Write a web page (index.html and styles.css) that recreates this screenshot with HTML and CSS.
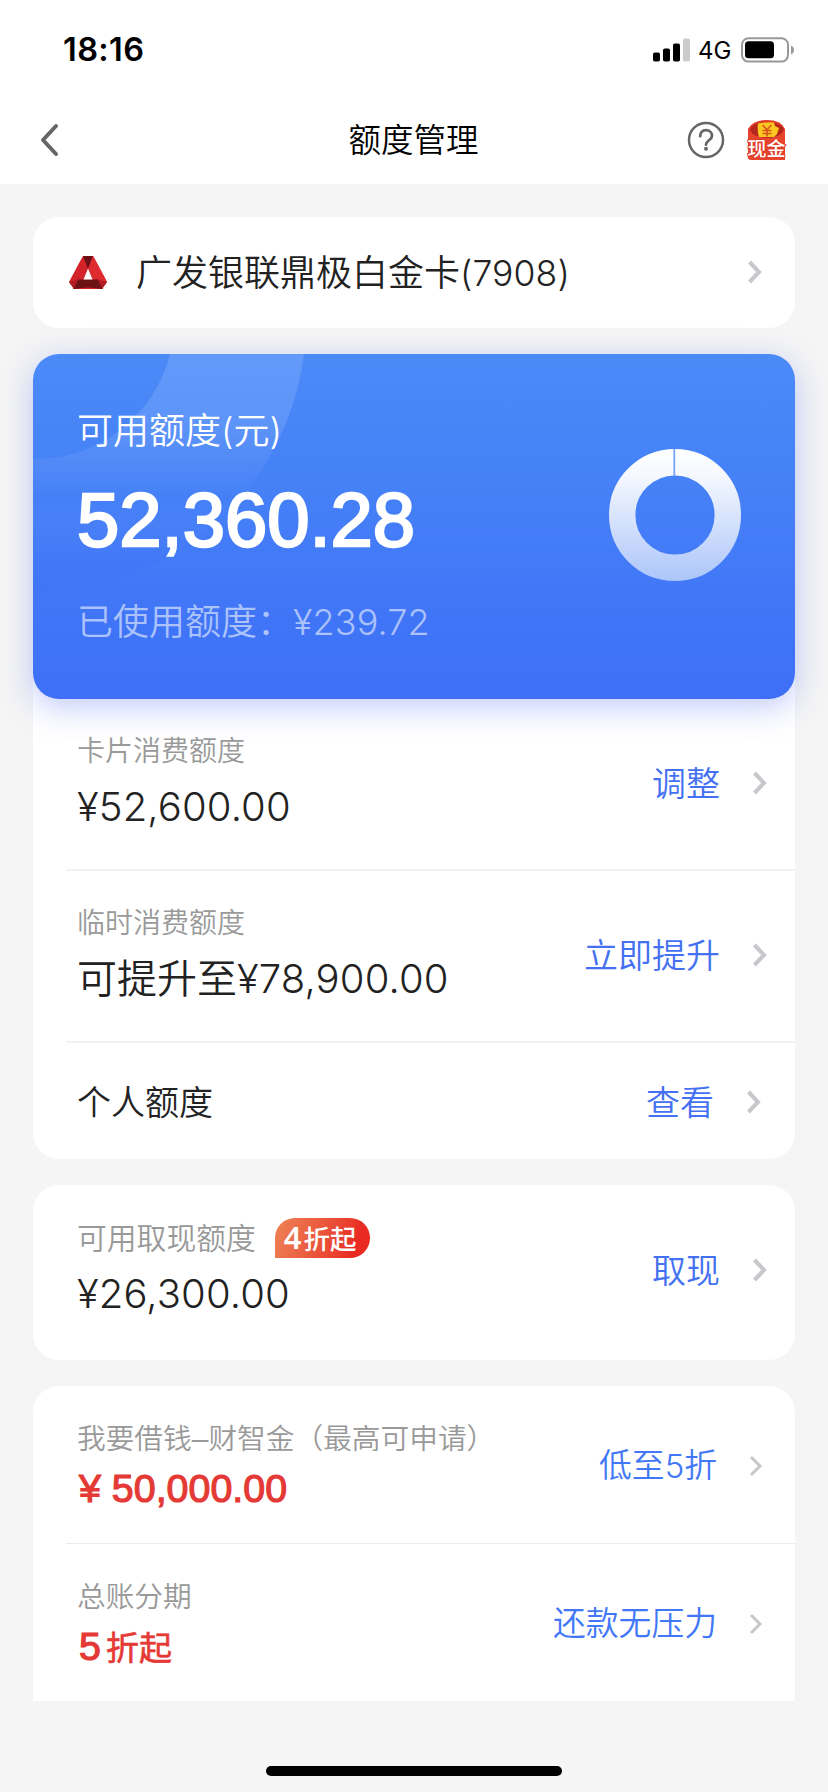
FILE: index.html
```html
<!DOCTYPE html>
<html lang="zh-CN">
<head>
<meta charset="utf-8">
<title>额度管理</title>
<link rel="stylesheet" href="styles.css">
</head>
<body>
<div class="page">
  <header class="top">
    <div class="status">
      <span class="time">18:16</span>
      <span class="status-right">
        <svg class="signal" width="37" height="24" viewBox="0 0 37 24">
          <rect x="0" y="14.5" width="7" height="9" rx="1.8"/>
          <rect x="10" y="10.5" width="7" height="13" rx="1.8"/>
          <rect x="20" y="5.5" width="7" height="18" rx="1.8"/>
          <rect x="30" y="0.5" width="7" height="23" rx="1.8" fill="#ccc"/>
        </svg>
        <span class="net">4G</span>
        <svg class="battery" width="54" height="26" viewBox="0 0 54 26">
          <rect x="1" y="1.2" width="46" height="23.4" rx="6.5" fill="none" stroke="#999" stroke-width="2"/>
          <rect x="4" y="4.2" width="29" height="17" rx="3.5"/>
          <path d="M50 8.5c4 1.5 4 7.500 0 9z" fill="#999"/>
        </svg>
      </span>
    </div>
    <nav class="nav">
      <svg class="back" width="20" height="34" viewBox="0 0 20 34"><path d="M16 3 3 17 16 31" fill="none" stroke="#666" stroke-width="4" stroke-linecap="round" stroke-linejoin="round"/></svg>
      <h1 class="title">额度管理</h1>
      <div class="tools">
        <svg width="38" height="38" viewBox="0 0 38 38" fill="none" stroke="#666">
          <circle cx="19" cy="19" r="17" stroke-width="2.500"/>
          <path d="M13.200 15.200C13.200 11.500 15.800 9.200 19 9.200s6 2.200 6 5.500c0 4.500-6 4.600-6 9" stroke-width="2.800" stroke-linecap="round"/>
          <circle cx="19" cy="27.800" r="2" fill="#666" stroke="none"/>
        </svg>
        <svg width="40" height="42" viewBox="0 0 40 42">
          <path d="M1 10Q6 1 20 1t18 9v31H5q-4 0-4-3z" fill="#e23b27"/>
          <path d="M3 10Q8 3 20 3t17 7l-5 9H8z" fill="#b5261b"/>
          <path d="M1 12q9 7 19 7t18-7v29H5q-4 0-4-3z" fill="#e8452f"/>
          <path d="M11 4.500q8-2 16-1l1 3.500 4 2-2 6-3 3H12q-2-7-1-13.500z" fill="#fbc81f"/>
          <path d="M15.500 6l4.500 4.500L24.500 6M20 10.500v7M15.500 11.500h9M15.500 14.500h9" fill="none" stroke="#d8541c" stroke-width="1.600"/>
          <text class="cash-text" x="19.500" y="37.300" text-anchor="middle">现金</text>
        </svg>
      </div>
    </nav>
  </header>

  <main class="content">
    <section class="card picker">
      <svg class="bank" width="38" height="36" viewBox="0 0 38 36">
        <path d="M14 1h10l5 9 9 17-5 7H5l-5-7 9-17z" fill="#d3222a"/>
        <path d="M14 1h10l-5 13z" fill="#6d1015"/>
        <path d="M24 1 19 14l4.500 10.500L38 27 29 10z" fill="#dd2b30"/>
        <path d="M9 24.500h20L34 34l-15-1.500L4 34z" fill="#6d1213"/>
        <path d="M0 27 9 24.500 5 34zM38 27l-9-2.500L33 34z" fill="#b01c22"/>
        <path d="M19 13.500l4.500 11h-9z" fill="#fff"/>
      </svg>
      <span class="card-name">广发银联鼎极白金卡<span class="tail">(7908)</span></span>
      <svg class="chev" width="16" height="26" viewBox="0 0 16 26"><path d="M2.500 3 12 13 2.500 23"/></svg>
    </section>

    <section class="panel">
      <div class="hero">
        <svg class="deco" width="300" height="260" viewBox="0 0 300 260">
          <defs><linearGradient id="arc" gradientUnits="userSpaceOnUse" x1="0" y1="0" x2="0" y2="240">
            <stop offset="0" stop-color="#fff" stop-opacity=".13"/><stop offset=".3" stop-color="#fff" stop-opacity=".12"/><stop offset=".6" stop-color="#fff" stop-opacity="0"/><stop offset=".85" stop-color="#2c5cf0" stop-opacity=".07"/><stop offset="1" stop-color="#2c5cf0" stop-opacity=".05"/>
          </linearGradient></defs>
          <circle cx="3" cy="-33" r="204" fill="none" stroke="url(#arc)" stroke-width="132"/>
        </svg>
        <div class="hero-text">
          <div class="hero-label">可用额度<span class="paren">(</span>元<span class="paren">)</span></div>
          <div class="hero-amount">52,360.28</div>
          <div class="hero-used">已使用额度：<span class="used-num">¥239.72</span></div>
        </div>
        <svg class="ring" width="132" height="132" viewBox="0 0 132 132">
          <defs><linearGradient id="rg" gradientUnits="userSpaceOnUse" x1="0" y1="0" x2="0" y2="132"><stop offset="0" stop-color="#fff"/><stop offset=".2" stop-color="#f5f8fe"/><stop offset="1" stop-color="#acc5fa"/></linearGradient></defs>
          <circle cx="66" cy="66" r="52.800" fill="none" stroke="url(#rg)" stroke-width="26.400"/>
          <path d="M65.300 0v27" stroke="#77a5f8" stroke-width="1.800"/>
        </svg>
      </div>

      <div class="row">
        <div class="info"><div class="label">卡片消费额度</div><div class="value">¥52,600.00</div></div>
        <a class="action">调整<svg class="chev" width="16" height="26" viewBox="0 0 16 26"><path d="M2.500 3 12 13 2.500 23"/></svg></a>
      </div>
      <div class="row">
        <div class="info"><div class="label">临时消费额度</div><div class="value"><span class="han">可提升至</span>¥78,900.00</div></div>
        <a class="action">立即提升<svg class="chev" width="16" height="26" viewBox="0 0 16 26"><path d="M2.500 3 12 13 2.500 23"/></svg></a>
      </div>
      <div class="row single">
        <div class="plain">个人额度</div>
        <a class="action">查看<svg class="chev" width="16" height="26" viewBox="0 0 16 26"><path d="M2.500 3 12 13 2.500 23"/></svg></a>
      </div>
    </section>

    <section class="card cash">
      <div class="row">
        <div class="info"><div class="label wide">可用取现额度<span class="badge"><b class="badge-num">4</b>折起</span></div><div class="value">¥26,300.00</div></div>
        <a class="action">取现<svg class="chev" width="16" height="26" viewBox="0 0 16 26"><path d="M2.500 3 12 13 2.500 23"/></svg></a>
      </div>
    </section>

    <section class="card loans">
      <div class="row">
        <div class="info"><div class="label mid">我要借钱<span class="dash">–</span>财智金（最高可申请）</div><div class="promo">¥ 50,000.00</div></div>
        <a class="action">低至<span class="act-num">5</span>折<svg class="chev thin" width="16" height="26" viewBox="0 0 16 26"><path d="M3 4 12 13 3 22"/></svg></a>
      </div>
      <div class="row">
        <div class="info"><div class="label mid">总账分期</div><div class="promo"><span class="promo-num">5</span><span class="promo-han">折起</span></div></div>
        <a class="action">还款无压力<svg class="chev thin" width="16" height="26" viewBox="0 0 16 26"><path d="M3 4 12 13 3 22"/></svg></a>
      </div>
    </section>
  </main>
  <div class="home"></div>
</div>
</body>
</html>
```
FILE: styles.css
```css
* { box-sizing: border-box; }
body {
  margin: 0;
  background: #f5f5f5;
  color: #222;
  font-family: "Liberation Sans", "Noto Sans CJK SC", sans-serif;
  font-weight: 350;
}
svg { display: block; flex: none; }
.page {
  width: 828px;
  height: 1792px;
  display: flex;
  flex-direction: column;
  overflow: hidden;
}

.top { background: #fff; height: 184px; flex: none; color: #000; }
.status {
  height: 96px;
  display: flex;
  align-items: center;
  justify-content: space-between;
  padding: 4px 33px 0 63px;
}
.time { font: 600 32.500px/40px Inter, sans-serif; letter-spacing: 0.4px; }
.status-right { display: flex; align-items: center; }
.net { font: 400 24px/28px Inter, sans-serif; margin: 2px 11px 0 8px; width: 32px; }
.nav {
  height: 88px;
  display: grid;
  grid-template-columns: 1fr auto 1fr;
  align-items: center;
  padding: 0 41px 0 40px;
}
.title { margin: 2px 0 0; font-size: 32.500px; line-height: 48px; font-weight: 350; }
.tools { display: flex; justify-content: flex-end; align-items: center; gap: 22px; }
.cash-text {
  font: 500 19px "Noto Sans CJK SC", sans-serif;
  fill: #fff;
  stroke: #e23b27;
  stroke-width: 2px;
  paint-order: stroke;
}

.content { padding: 33px 33px 0; }
.card { background: #fff; border-radius: 26px; }
.picker {
  height: 111px;
  display: flex;
  align-items: center;
  padding: 0 32px 0 36px;
}
.card-name { flex: 1; margin: 2px 0 0 29px; font-size: 36px; line-height: 50px; }
.tail { font-family: Inter, sans-serif; font-size: 35.500px; font-weight: 300; letter-spacing: 0.1px; }
.chev { fill: none; stroke: #c7c7cc; stroke-width: 4px; }
.picker .chev { margin-top: -2px; }
.chev.thin { stroke: #c8c8c8; stroke-width: 3px; }

.panel { margin-top: 26px; background: #fff; border-radius: 26px; height: 805px; }
.hero {
  position: relative;
  height: 345px;
  border-radius: 26px;
  background: linear-gradient(180deg, #4c8af8 0%, #4785f7 22%, #447df7 52%, #4075f7 76%, #3e70f7 100%);
  box-shadow: 0 8px 32px rgba(70, 100, 240, .34);
  color: #fff;
  display: flex;
  align-items: flex-start;
  justify-content: space-between;
  padding: 0 54px 0 44px;
}
.deco { position: absolute; left: 0; top: 0; border-radius: 26px 0 0 0; }
.hero-text { position: relative; padding-top: 51px; }
.hero-label { font-size: 36px; line-height: 52px; }
.paren { font-family: Inter, sans-serif; font-weight: 300; }
.hero-amount {
  margin-top: 22px;
  font-size: 76px;
  line-height: 80px;
  font-weight: 400;
  -webkit-text-stroke: 2.400px #fff;
}
.hero-used { margin-top: 36px; font-size: 36px; line-height: 52px; color: rgba(255, 255, 255, .56); }
.used-num { font-family: Inter, sans-serif; font-weight: 300; letter-spacing: 0.1px; }
.ring { margin-top: 95px; }

.row {
  position: relative;
  height: 172px;
  display: flex;
  align-items: flex-start;
  justify-content: space-between;
  padding: 33px 27px 0 44px;
}
.row:not(:last-child)::after {
  content: "";
  position: absolute;
  left: 33px;
  right: 0;
  bottom: 0;
  height: 2px;
  background: #f2f2f2;
}
.label { font-size: 28px; line-height: 40px; color: #999; display: flex; align-items: center; }
.label.wide { font-size: 29.800px; }
.label.mid { font-size: 28.700px; }
.value {
  margin-top: 7px;
  font-family: Inter, "Noto Sans CJK SC", sans-serif;
  font-size: 40px;
  line-height: 56px;
  letter-spacing: 0.150px;
}
.han { letter-spacing: 0; }
.action {
  margin-top: 28px;
  display: flex;
  align-items: center;
  font-size: 34px;
  line-height: 48px;
  color: #4470f2;
}
.action .chev { margin: -2px 0 0 32px; }
.row.single { height: 116px; align-items: center; padding: 3px 33px 0 44px; }
.single .action { margin: 0; }
.plain { font-size: 34px; line-height: 48px; }

.cash { margin-top: 26px; height: 175px; }
.cash .row { padding-top: 34px; }
.badge {
  margin: -2px 0 0 19px;
  width: 95px;
  height: 40px;
  border-radius: 20px 20px 20px 0;
  background: linear-gradient(110deg, #ee8456 0%, #ea4e38 55%, #e92a22 85%);
  color: #fff;
  font: 500 26.500px/38px "Noto Sans CJK SC", sans-serif;
  padding-left: 9px;
  white-space: nowrap;
}
.badge-num { font: 600 31px/38px "Noto Sans", sans-serif; margin-right: 2px; }

.loans { margin-top: 26px; height: 315px; border-radius: 26px 26px 0 0; }
.loans .row { height: 158px; padding-right: 31px; }
.loans .row:last-child { height: 157px; }
.loans .row:not(:last-child)::after { height: 1px; background: #ececec; }
.loans .action { margin-top: 23px; color: #4277f8; font-size: 32.800px; }
.loans .chev { margin: 0 0 0 31px; }
.act-num { font-family: Inter, sans-serif; font-weight: 300; font-size: 33px; }
.dash { font-size: 30px; }
.promo {
  margin: 3px 0 0 2px;
  font-size: 39.400px;
  line-height: 52px;
  color: #e53935;
  font-weight: 400;
  -webkit-text-stroke: 1.200px #e53935;
}
.promo-han { font-size: 33px; margin-left: 5px; -webkit-text-stroke-width: 0.6px; }

.home { width: 296px; height: 10px; border-radius: 5px; background: #000; margin: 65px auto 0; flex: none; }
```
